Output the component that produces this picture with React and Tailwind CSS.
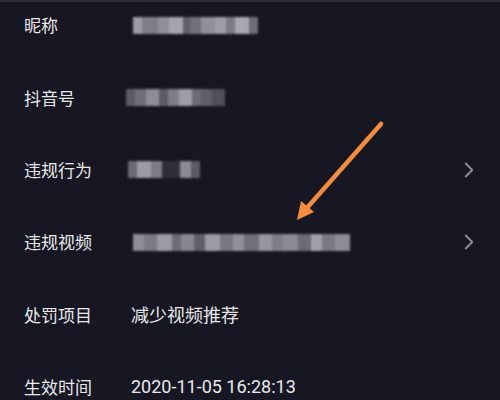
import { ChevronRight } from 'lucide-react'

// blurred (pixelated) placeholder values: [width, shade]
const ROWS = [
  { label: '昵称', shift: 'ml-[2px]', blur: [[9, '#9a9ba3'], [16, '#7d7e87'], [11, '#8e8f98'], [14, '#a3a4ac'], [7, '#5f6069'], [11, '#6f7079'], [14, '#8f9099'], [11, '#9d9ea6'], [9, '#7a7b84'], [14, '#a7a8b0'], [9, '#6d6e77']] },
  { label: '抖音号', shift: '-ml-[5px]', blur: [[9, '#5a5b64'], [11, '#6e6f78'], [13, '#8c8d96'], [9, '#5c5d66'], [11, '#7c7d86'], [13, '#9c9da5'], [9, '#6a6b74'], [11, '#5e5f68'], [13, '#4f5059']] },
  { label: '违规行为', shift: '-ml-[3px]', blur: [[9, '#6a6b74'], [14, '#9a9ba3'], [11, '#7c7d86'], [18, '#2e2f39'], [11, '#8a8b94'], [9, '#5a5b64']], chevron: true },
  { label: '违规视频', shift: 'ml-[2px]', blur: [[11, '#8c8d96'], [13, '#7a7b84'], [15, '#9a9ba3'], [9, '#6c6d76'], [13, '#868790'], [11, '#5e5f68'], [15, '#9a9ba3'], [13, '#777881'], [11, '#8f9099'], [15, '#6f7079'], [13, '#9596a0'], [11, '#7d7e87'], [15, '#8a8b94'], [13, '#6a6b74'], [11, '#9fa0a8'], [13, '#7a7b84'], [15, '#8c8d96']], chevron: true },
  { label: '处罚项目', value: '减少视频推荐' },
  { label: '生效时间', value: '2020-11-05 16:28:13', mono: true },
]

function Blur({ blocks }) {
  return (
    <div className="flex h-[17px] blur-[0.8px]">
      {blocks.map(([w, c], i) => (
        <div key={i} style={{ width: w, background: c }} />
      ))}
    </div>
  )
}

export default function App() {
  return (
    <div className="relative w-[500px] h-[400px] overflow-hidden bg-[#161722] border-t-2 border-[#2b2d38] text-[#e8e8ea] font-['Noto_Sans_CJK_SC','Noto_Sans',sans-serif]">
      <div className="-mt-[13px]">
        {ROWS.map((r) => (
          <div key={r.label} className="flex items-center h-[72.3px] pl-6 pr-[18px]">
            <span className="w-[107px] shrink-0 text-[17px]">{r.label}</span>
            {r.value ? (
              <span className={r.mono ? "text-[18px] font-['Roboto','Noto_Sans_CJK_SC',sans-serif]" : 'text-[18px]'}>{r.value}</span>
            ) : (
              <div className={r.shift}>
                <Blur blocks={r.blur} />
              </div>
            )}
            {r.chevron && <ChevronRight className="ml-auto text-[#8b8c95]" size={26} strokeWidth={1.8} />}
          </div>
        ))}
      </div>
      <svg className="absolute left-0 top-0 pointer-events-none" width="500" height="400">
        <line x1="381" y1="122" x2="306" y2="207" stroke="#f68c3c" strokeWidth="4.5" strokeLinecap="round" />
        <polygon points="297,218 301,199 314,210" fill="#f68c3c" />
      </svg>
    </div>
  )
}
